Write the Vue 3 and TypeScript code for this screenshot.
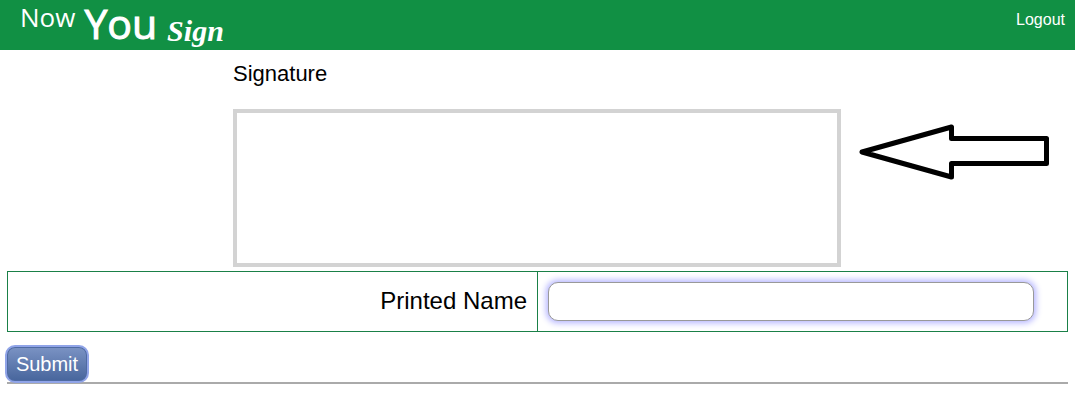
<template>
  <div class="page">
    <header class="topbar">
      <div class="logo">
        <span class="now">Now</span>
        <span class="you">You</span>
        <span class="sign">Sign</span>
      </div>
      <a class="logout" href="#">Logout</a>
    </header>

    <div class="content">
      <div class="sig-block">
        <div class="sig-label">Signature</div>
        <div class="sig-row">
          <div class="sig-box"></div>
          <svg class="arrow" width="200" height="56" viewBox="0 0 200 56">
            <path d="M10 28 L99.5 3 L99.5 14.5 L194.5 14.5 L194.5 39.5 L99.5 39.5 L99.5 53 Z" fill="#fff" stroke="#000" stroke-width="5" stroke-linejoin="round" />
          </svg>
        </div>
      </div>

      <table class="name-table">
        <tbody>
          <tr>
            <td class="name-label">Printed Name</td>
            <td class="name-cell"><input class="name-input" type="text" v-model="printedName" /></td>
          </tr>
        </tbody>
      </table>

      <button class="submit" type="button">Submit</button>
      <hr class="rule" />
    </div>
  </div>
</template>

<script setup lang="ts">
import { ref } from "vue";

const printedName = ref("");
</script>

<style>
html,
body {
  background: #fff;
}
</style>

<style scoped>
.page {
  font-family: "Liberation Sans", Arial, sans-serif;
  color: #000;
}

.topbar {
  height: 50px;
  background: #119044;
  display: flex;
  justify-content: space-between;
  color: #fff;
}

.logo {
  display: flex;
  align-items: flex-start;
  padding-left: 20px;
  font-family: "Open Sans", sans-serif;
}

.now {
  font-size: 26px;
  line-height: 1.2;
  margin-top: 2px;
}

.you {
  font-size: 41px;
  line-height: 1;
  margin: 3px 0 0 9px;
  -webkit-text-stroke: 1px #fff;
}

.sign {
  font-family: "Liberation Serif", serif;
  font-style: italic;
  font-weight: 700;
  font-size: 30px;
  line-height: 1;
  margin: 16px 0 0 10px;
}

.logout {
  color: #fff;
  text-decoration: none;
  font-size: 16px;
  margin: 11px 10px 0 0;
}

.content {
  padding: 0 7px;
}

.sig-block {
  padding-left: 226px;
}

.sig-label {
  font-size: 22px;
  line-height: 23px;
  padding-top: 12px;
  height: 59px;
  box-sizing: border-box;
}

.sig-row {
  display: flex;
  align-items: flex-start;
}

.sig-box {
  width: 600px;
  height: 150px;
  border: 4px solid #d3d3d3;
}

.arrow {
  margin: 15px 0 0 11px;
  flex: none;
}

.name-table {
  width: 1061px;
  height: 61px;
  margin-top: 4px;
  border-collapse: collapse;
}

.name-table td {
  border: 1px solid #1a8048;
  padding: 0;
}

.name-table .name-label {
  width: 519px;
  text-align: right;
  padding: 0 10px 2px 0;
  font-size: 24px;
}

.name-table .name-cell {
  padding-left: 10px;
}

.name-input {
  display: block;
  width: 486px;
  height: 39px;
  box-sizing: border-box;
  border: 1px solid #999;
  border-radius: 10px;
  outline: none;
  background: #fff;
  box-shadow: 0 0 6px 2px #b4b4ff;
}

.submit {
  display: block;
  position: relative;
  z-index: 1;
  width: 84px;
  height: 38px;
  margin: 13px 0 0 -2px;
  padding: 0;
  border: 2px solid #90a4e8;
  border-radius: 10px;
  background: linear-gradient(#7b93c4, #47659c);
  box-shadow: inset 0 0 0 1px #4f6ba3;
  color: #fff;
  font-family: inherit;
  font-size: 20px;
}

.rule {
  height: 2px;
  margin: -1px 0 0;
  border: 0;
  background: #aaa;
}
</style>
